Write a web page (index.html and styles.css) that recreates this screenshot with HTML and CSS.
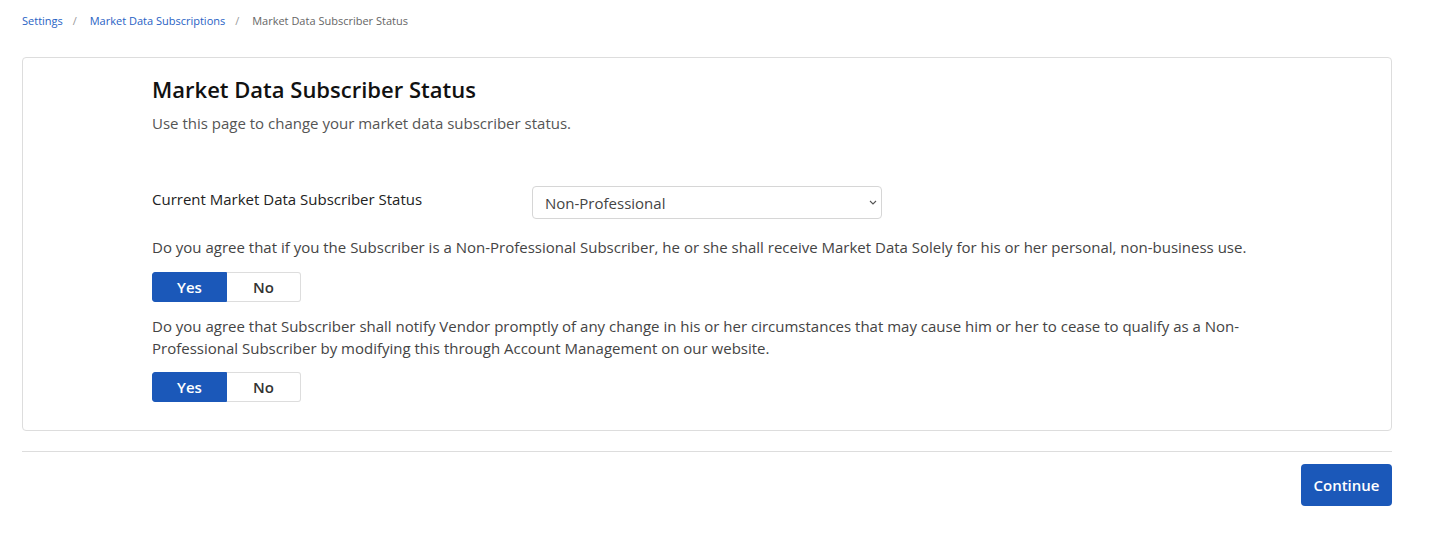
FILE: index.html
```html
<!DOCTYPE html>
<html lang="en">
<head>
  <meta charset="UTF-8" />
  <title>Market Data Subscriber Status</title>
  <link rel="stylesheet" href="styles.css">
</head>
<body>
  <nav class="crumbs">
    <a href="#">Settings</a><span class="sep">/</span>
    <a href="#">Market Data Subscriptions</a><span class="sep">/</span>
    <span class="current">Market Data Subscriber Status</span>
  </nav>

  <div class="card">
    <div class="card-body">
      <h1>Market Data Subscriber Status</h1>
      <p class="intro">Use this page to change your market data subscriber status.</p>

      <div class="status-row">
        <label for="status">Current Market Data Subscriber Status</label>
        <div class="select-wrap">
          <select id="status">
            <option>Non-Professional</option>
            <option>Professional</option>
          </select>
          <svg class="chev" width="8" height="5" viewBox="0 0 8 5"><path d="M1 1l3 3 3-3" fill="none" stroke="#555" stroke-width="1.1"/></svg>
        </div>
      </div>

      <p class="question">Do you agree that if you the Subscriber is a Non-Professional Subscriber, he or she shall receive Market Data Solely for his or her personal, non-business use.</p>
      <div class="toggle">
        <button class="active">Yes</button>
        <button>No</button>
      </div>

      <p class="question">Do you agree that Subscriber shall notify Vendor promptly of any change in his or her circumstances that may cause him or her to cease to qualify as a Non-<br>Professional Subscriber by modifying this through Account Management on our website.</p>
      <div class="toggle">
        <button class="active">Yes</button>
        <button>No</button>
      </div>
    </div>
  </div>

  <div class="footer">
    <button class="continue-btn">Continue</button>
  </div>
</body>
</html>
```

FILE: styles.css
```css
body {
  margin: 0;
  padding: 0 52px 0 22px;
  font-family: "Open Sans", "Liberation Sans", sans-serif;
  color: #222;
  background: #fff;
}

.crumbs {
  font-size: 11px;
  padding-top: 13px;
  height: 57px;
  box-sizing: border-box;
}

.crumbs a {
  color: #2862c4;
  text-decoration: none;
}

.crumbs .sep {
  color: #999;
  margin: 0 10px;
}

.crumbs .current {
  color: #666;
}

.card {
  border: 1px solid #ddd;
  border-radius: 4px;
}

.card-body {
  padding: 16px 20px 28px 129px;
}

h1 {
  font-size: 22px;
  font-weight: 600;
  color: #111;
  margin: 0;
  line-height: 30px;
}

.intro {
  font-size: 15px;
  color: #555;
  margin: 9px 0 0;
  line-height: 20px;
}

.status-row {
  display: flex;
  align-items: center;
  margin-top: 53px;
}

.status-row label {
  font-size: 15px;
  width: 380px;
  color: #222;
  margin-top: -8px;
}

.select-wrap {
  position: relative;
}

.select-wrap select {
  appearance: none;
  -webkit-appearance: none;
  width: 350px;
  height: 33px;
  border: 1px solid #d6d6d6;
  border-radius: 4px;
  background: #fff;
  font-family: inherit;
  font-size: 15px;
  color: #444;
  padding: 0 12px;
}

.chev {
  position: absolute;
  right: 5px;
  top: 14px;
}

.question {
  font-size: 15px;
  color: #444;
  line-height: 22px;
  margin: 17px 0 14px;
}

.toggle + .question {
  margin: 13px 0 13px;
}

.toggle {
  display: flex;
  width: 149px;
  height: 30px;
}

.toggle button {
  flex: 1;
  border: 1px solid #ddd;
  background: #fff;
  font-family: inherit;
  font-size: 15px;
  font-weight: 600;
  color: #333;
  cursor: pointer;
  padding: 0;
}

.toggle button:first-child {
  border-radius: 3px 0 0 3px;
}

.toggle button:last-child {
  border-radius: 0 3px 3px 0;
  border-left: none;
}

.toggle .active {
  background: #1b58b9;
  border-color: #1b58b9;
  color: #fff;
}

.footer {
  border-top: 1px solid #ddd;
  margin-top: 20px;
  padding-top: 12px;
  display: flex;
  justify-content: flex-end;
}

.continue-btn {
  background: #1b58b9;
  color: #fff;
  border: none;
  border-radius: 4px;
  font-family: inherit;
  font-size: 15px;
  font-weight: 600;
  width: 91px;
  height: 42px;
  cursor: pointer;
}
```
